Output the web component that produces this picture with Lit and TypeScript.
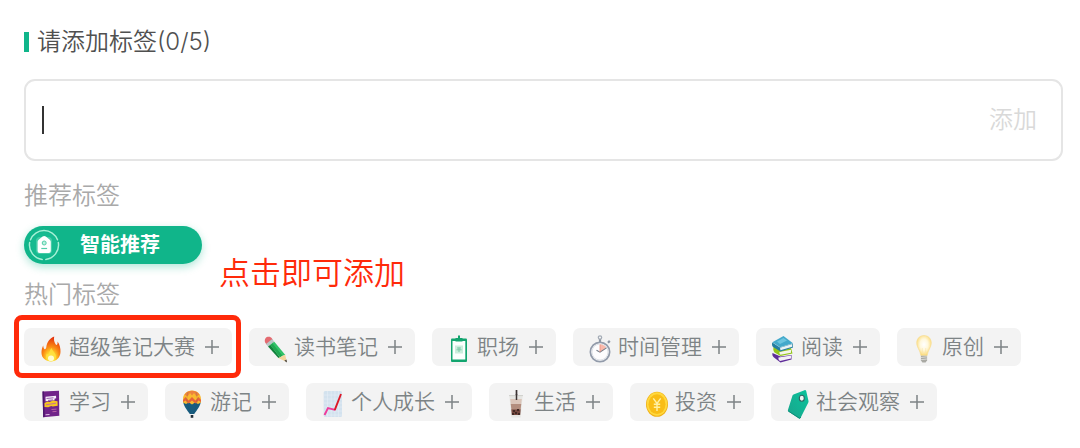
import { LitElement, html, css, svg, SVGTemplateResult } from "lit";
import { customElement, property, state } from "lit/decorators.js";

const icons: Record<string, SVGTemplateResult> = {
  fire: svg`
    <defs>
      <radialGradient id="fire" cx=".5" cy=".85" r=".8">
        <stop offset="0" stop-color="#fff9b0"/><stop offset=".25" stop-color="#ffdc2e"/>
        <stop offset=".55" stop-color="#fb8b14"/><stop offset="1" stop-color="#e5350f"/>
      </radialGradient>
    </defs>
    <path fill="url(#fire)" d="M17.200 1.500c-.4 2.800-.3 5 1.400 7.700.9 1.300 1.700.900 1.900-.6.100-.9.100-1.500 0-2.200 2.200 2.900 3.200 6.600 3 10.600C23.300 22.600 19.300 26.500 14 26.500S4.600 22.900 4.500 18c-.1-2.700.6-5.400 1.700-7.600.2 1.600.5 3 1.200 3.700.9.6 1.700-.3 1.900-2C9.800 7.500 12.500 3.300 17.200 1.500z"/>
    <path fill="#ffe03f" fill-opacity=".85" d="M14.600 13c.5 2.800 4.300 4.800 4.300 8.500 0 2.700-2.200 4.800-4.900 4.800s-4.900-1.800-4.900-4.600c0-1.300.4-2.500.9-3.200.2 1 .8 1.300 1.300 1 1.300-.9 1.100-4.300 3.300-6.500z"/>
    <ellipse cx="14" cy="23.300" rx="3" ry="2.800" fill="#fffbd0"/>`,
  pencil: svg`
    <path fill="#e46a70" d="M3.500 3.200c1.500-2 5.200-2 6.500.200l.8 1.500-6.300 4.600-1-1.400c-1-1.500-1-3.500 0-4.900z"/>
    <path fill="#b9c6c6" d="M4 8.900l6.300-4.800 2 2.600-6.300 4.900z"/>
    <path fill="#12823c" d="M6 11.600l2.400-1.800 9.800 13-1.800.300z"/>
    <path fill="#1fa851" d="M8 10l3.100-2.400 9.800 13-2.900 2z"/>
    <path fill="#30c268" d="M10.300 8.200l2-1.500 11 13.300-2.600.800z"/>
    <path fill="#f3d59b" d="M16.200 23l7-3.300 1.600 7.300z"/>
    <path fill="#45413c" d="M22.300 25.800l2.200-1.400.5 3.100z"/>`,
  board: svg`
    <rect x="6" y="3.500" width="16" height="23.500" rx="1" fill="#12a56f"/>
    <rect x="7.500" y="6" width="12.800" height="18.500" fill="#fbfffd"/>
    <rect x="10" y="10.500" width="8" height="8" fill="#cbeedd"/>
    <path d="M12 13h4M11.500 14.800h5M14 12.500v4.500" stroke="#7fc9a8" fill="none"/>
    <path fill="#14a46f" d="M13 .5h2V3h2.500v3.500h-7V3H13z"/>`,
  timer: svg`
    <circle cx="14" cy="2.500" r="1.700" fill="none" stroke="#a4acb6" stroke-width="1.200"/>
    <path d="M14 4.200v3M22 7.700l1.800-1.800" stroke="#8d96a3" stroke-width="2.200"/>
    <circle cx="14" cy="17" r="9.600" fill="#fdfdfe" stroke="#929baa" stroke-width="1.800"/>
    <circle cx="14" cy="17" r="8" fill="none" stroke="#dfe3e8" stroke-width="1"/>
    <path fill="#f9b9ab" d="M14 17V9.300a7.600 7.600 0 0 1 6.200 3.400z"/>
    <path d="M10.500 15.300L14 17.200l6.500-4.300" fill="none" stroke="#747c87" stroke-width="1.100"/>
    <path d="M14 17V9.500" stroke="#e88e7e" stroke-width=".8"/>`,
  books: svg`
    <path fill="#5f2c99" d="M3.500 18l8 3.500 11-1.500v4.500l-11 3L5 22.500c-1.500-1-2-3-1.500-4.500z"/>
    <path fill="#f3f0f6" d="M9.500 22.500l12.500-2v3l-11 2.500c-1.300-.700-1.800-2-1.500-3.500z"/>
    <path fill="#94c51b" d="M5 11l7 4.500L22 13l1.500 5.500-12 2.500-6-3.500c-1.500-1.500-1.500-5-.5-6.500z"/>
    <path fill="#f5f5ea" d="M10.500 17l11.500-2.300v3l-10.500 2.100c-1-.7-1.200-1.600-1-2.800z"/>
    <path fill="#237da0" d="M3.300 7.500l7.700 5L24 8.500v4l-12.500 4-7.500-4.500c-1-1-1.300-3-.7-4.500z"/>
    <path fill="#e9f3f5" d="M11 12.700l12.300-3.600v2.600l-11.800 3.600z"/>
    <path fill="#43a9cb" d="M3.300 7.300L14.500 1 24 8.300l-13 4z"/>
    <path fill="#6cc5df" d="M8 6.600l6.500-3.700 3.500 2.500-7 3.600z"/>`,
  bulb: svg`
    <defs>
      <radialGradient id="bulb" cx=".5" cy=".45" r=".55">
        <stop offset="0" stop-color="#fff"/><stop offset=".5" stop-color="#fff8dc"/><stop offset="1" stop-color="#fbd976"/>
      </radialGradient>
    </defs>
    <path fill="url(#bulb)" stroke="#f7dc91" stroke-width=".6" d="M14 .5c-4.300 0-7.300 3.200-7.300 7.400 0 4.800 3.500 7 4.100 12.600h6.400c.6-5.600 4.100-7.800 4.100-12.600C21.300 3.700 18.300.5 14 .5z"/>
    <path d="M12.700 19l-.5-6M15.300 19l.5-6" stroke="#f8e4ab" stroke-width=".6"/>
    <path fill="#a9a9a3" d="M10.900 20.800h6.200v4.400l-1.500 2.300h-3.200l-1.500-2.300z"/>
    <path d="M11 22.500l6-.7M11 24.700l6-.7" stroke="#dededa" stroke-width=".9"/>`,
  study: svg`
    <path fill="#702389" d="M5.500 1.500L22 .8l.3 25L6.200 27.200z"/>
    <path fill="#4b176b" d="M5.500 1.500L7 1.400l.7 25.700-1.500.100z"/>
    <path fill="#f6eefa" d="M8.500 6.800l10.500-1 .2 2.500-1.700.400.100 1.600-9 1z"/>
    <path d="M9.500 8.500l7-.7M11 10.400l5-.5" stroke="#702389" stroke-width=".7"/>
    <path fill="#f6c51e" d="M7.500 13l3-1.500 2 .5 3.500-1.500 4.500.8.2 4.500-5 .8-1.500-.6-3 1.300-3.700-.2z"/>
    <path d="M9 14.800l10-1.600M14.500 19.500l5-.4M15.500 21.700l4-.3" stroke="#bf68a8" stroke-width=".9"/>
    <path d="M8.500 24.800l4-.3" stroke="#e5c8ec"/>`,
  balloon: svg`
    <path fill="#175c7f" d="M5 10.500h18c-.2 5-4 9.500-6.800 13.500h-4.400C9 20 5.200 15.500 5 10.500z"/>
    <path fill="#f9b92f" d="M14 .5c-5.300 0-9 3.600-9 8.700v3.300l3 1.500 3-1.500 3 2 3-2 3 1.500 3-1.500V9.200c0-5.100-3.700-8.700-9-8.700z"/>
    <path fill="#e66339" d="M5 10l2.500-3 3 3.500L14 7l3.500 3.500 3-3.500 2.500 3v2L20.500 10.500l-3 3L14 10.500l-3.500 3-3-3L5 12z"/>
    <path fill="#ed823d" d="M6.500 4.500l3 2L12 3l2 2.500L16 3l2.500 3.500 3-2L19 2.100C15.500.2 12.500.2 9 2.100z"/>
    <path d="M10 2c-2.500 7-.5 15 3 22M18 2c2.500 7 .500 15-3 22" fill="none" stroke="#293f55" stroke-opacity=".25" stroke-width=".6"/>
    <path fill="#222f3a" d="M12.700 25h2.600v2.800h-2.600z"/>`,
  chart: svg`
    <rect x="4.700" y="1" width="18.300" height="26" rx="1.500" fill="#d3e2ee"/>
    <path d="M8.500 1v26M12.200 1v26M15.900 1v26M19.600 1v26M4.700 5h18.300M4.700 9h18.300M4.700 13h18.300M4.700 17h18.300M4.700 21h18.300M4.700 25h18.300" stroke="#e5eff6" stroke-width=".6"/>
    <path d="M5.500 25L9 18l7.200 1.800" fill="none" stroke="#ef3b9a" stroke-width="1.900"/>
    <path d="M15.700 20.200L22 4" stroke="#dc1826" stroke-width="1.900"/>`,
  drink: svg`
    <path d="M14.500 0v7" stroke="#3c3434" stroke-width="1.700"/>
    <path fill="#e6e6e3" d="M7.300 5.500h13.400l-2.100 22h-9.200z"/>
    <path fill="#dbc5b9" d="M8.200 9h11.600l-.7 6H8.900z"/>
    <path fill="#b38d7d" d="M8.800 14h10.400l-.6 6H9.400z"/>
    <path fill="#75483f" d="M9.300 19.500h9.400l-.5 5.500H9.800z"/>
    <path fill="#422923" d="M11 20h2v2h-2zM15 19h2v2h-2zM13 22h2v2h-2zM16 23h2v2h-2zM10 23h2v2h-2z"/>
    <path d="M7 5.600h14" stroke="#cfcfcc"/>
    <path d="M14.500 4v6" stroke="#3c3434" stroke-width="1.500"/>`,
  coin: svg`
    <ellipse cx="14" cy="14.300" rx="11" ry="12.500" fill="#f0b015"/>
    <ellipse cx="14" cy="14" rx="10.300" ry="11.800" fill="#ffd83d"/>
    <ellipse cx="14" cy="14.200" rx="8.500" ry="9.900" fill="#f9bd16"/>
    <path d="M10.300 8.300L14 13.500l3.700-5.200M14 13.500V21M10.800 14.300h6.400M10.800 17.300h6.400" fill="none" stroke="#fff0a3" stroke-width="1.400"/>`,
  tag: svg`
    <defs>
      <linearGradient id="tag" x1="0" y1="1" x2="1" y2="0">
        <stop offset="0" stop-color="#19a58c"/><stop offset="1" stop-color="#0bc39c"/>
      </linearGradient>
    </defs>
    <path fill="url(#tag)" d="M9.500 4.500L20.500.200c.8-.3 1.500.1 1.700.9L24.500 11c.100.600 0 1.200-.3 1.700L16.500 28c-.4.700-1 .8-1.600.4L4.500 21.500c-.6-.4-.8-1-.5-1.700L8.500 5.500c.2-.5.500-.8 1-1z"/>
    <path d="M4.200 21L15.500 28.200 17 27" fill="none" stroke="#0d8d79" stroke-width="1"/>
    <ellipse cx="17.800" cy="8.200" rx="2.500" ry="3" fill="#eff5f4" stroke="#2c6560" stroke-width="1.100"/>`,
};

@customElement("tag-chip")
class TagChip extends LitElement {
  @property() icon = "";
  @property() label = "";

  static styles = css`
    :host { display: block; }
    .chip {
      display: flex;
      align-items: center;
      height: 38px;
      padding: 0 13px;
      border: 0;
      border-radius: 7px;
      background: #f3f3f3;
      color: #7d8385;
      font: inherit;
      font-size: 21px;
      line-height: 32px;
      white-space: nowrap;
      cursor: pointer;
    }
    .icon { flex: none; width: 28px; height: 28px; margin: 4px 4px 0 0; overflow: visible; }
    .plus { flex: none; width: 14px; height: 14px; margin-left: 10px; }
  `;

  render() {
    return html`<button class="chip" type="button">
      <svg class="icon" viewBox="0 0 28 28" aria-hidden="true">${icons[this.icon]}</svg>
      <span>${this.label}</span>
      <svg class="plus" viewBox="0 0 14 14" aria-hidden="true">
        <path d="M0 7h14M7 0v14" stroke="#7d8385" stroke-width="1.500"/>
      </svg>
    </button>`;
  }
}

@customElement("app-root")
class AppRoot extends LitElement {
  @state() private value = "";

  private tags = [
    ["fire", "超级笔记大赛"], ["pencil", "读书笔记"], ["board", "职场"],
    ["timer", "时间管理"], ["books", "阅读"], ["bulb", "原创"],
    ["study", "学习"], ["balloon", "游记"], ["chart", "个人成长"],
    ["drink", "生活"], ["coin", "投资"], ["tag", "社会观察"],
  ];

  static styles = css`
    :host {
      display: block;
      box-sizing: border-box;
      padding: 24px 17px 24px 24px;
      background: #fff;
      font-family: Inter, "Noto Sans CJK SC", sans-serif;
      font-weight: 350;
    }
    .title {
      display: flex;
      align-items: center;
      gap: 8px;
      color: #505050;
      font-size: 24px;
      line-height: 36px;
    }
    .title::before { content: ""; width: 5px; height: 20px; background: #10b58a; }
    .entry {
      display: flex;
      align-items: center;
      box-sizing: border-box;
      height: 82px;
      margin: 19px 0 17px;
      padding: 0 24px 0 16px;
      border: 2px solid #e5e5e5;
      border-radius: 11px;
    }
    .caret { width: 2px; height: 28px; background: #333; }
    .field {
      flex: 1;
      min-width: 0;
      border: 0;
      outline: 0;
      padding: 0;
      background: none;
      color: #505050;
      font: inherit;
      font-size: 24px;
      line-height: 36px;
    }
    .add {
      border: 0;
      padding: 0;
      background: none;
      color: #d9d9d9;
      font: inherit;
      font-size: 24px;
      line-height: 36px;
    }
    .group { margin: 0; color: #a9a9a9; font-size: 24px; font-weight: inherit; line-height: 36px; }
    .smart-row { position: relative; margin: 12px 0 13px; }
    .smart {
      display: flex;
      align-items: center;
      width: 178px;
      height: 38px;
      padding: 0 4px;
      border: 0;
      border-radius: 19px;
      background: #10b58a;
      box-shadow: 0 3px 8px #10b58a55;
      color: #fff;
      font: inherit;
      font-size: 20px;
      font-weight: 700;
      line-height: 30px;
    }
    .smart svg { width: 32px; height: 32px; margin-right: 20px; }
    .note {
      position: absolute;
      left: 195px;
      top: 24px;
      color: #ff2a0a;
      font-size: 31px;
      line-height: 46px;
      white-space: nowrap;
    }
    .tags {
      display: flex;
      flex-wrap: wrap;
      gap: 17px;
      margin: 15px 0 0;
      padding: 0;
      list-style: none;
    }
    .marked { position: relative; }
    .marked::after {
      content: "";
      position: absolute;
      inset: -13px -9px -12px -10px;
      border: 5px solid #ff2a0a;
      border-radius: 8px;
      pointer-events: none;
    }
  `;

  render() {
    return html`
      <label class="title" for="tag-input"><span>请添加标签(0/5)</span></label>
      <div class="entry">
        ${this.value ? "" : html`<span class="caret"></span>`}
        <input class="field" id="tag-input" type="text" .value=${this.value}
          @input=${(e: Event) => { this.value = (e.target as HTMLInputElement).value; }} />
        <button class="add" type="button">添加</button>
      </div>
      <h2 class="group">推荐标签</h2>
      <div class="smart-row">
        <button class="smart" type="button">
          <svg viewBox="0 0 32 32" aria-hidden="true">
            <circle cx="16" cy="16" r="13" fill="#26c49a" opacity=".35"/>
            <g fill="none" stroke="#a6f0d6" stroke-width="1.500" stroke-linecap="round">
              <path d="M2.500 10.700A14.500 14.500 0 0 1 29.500 10.700"/>
              <path d="M30.300 13.500A14.500 14.500 0 0 1 17.800 30.400"/>
              <path d="M14.200 30.400A14.500 14.500 0 0 1 1.700 13.500"/>
            </g>
            <rect x="8" y="8" width="16" height="17" rx="4" fill="#8be8c9" opacity=".4"/>
            <path fill="#fff" d="M14.600 7.600q1.600-1.200 3.200 0l4 3.200q1 .8 1 2V22q0 2-2 2h-9.200q-2 0-2-2v-9.200q0-1.200 1-2z"/>
            <circle cx="16.200" cy="14" r="2" fill="#bdf1df" stroke="#53cda9"/>
            <path d="M13.300 19.500h5.800" stroke="#53cda9" stroke-width="1.200"/>
          </svg>
          <span>智能推荐</span>
        </button>
        <span class="note">点击即可添加</span>
      </div>
      <h2 class="group">热门标签</h2>
      <ul class="tags">
        ${this.tags.map(([icon, label], i) => html`
          <li class=${i === 0 ? "marked" : "item"}><tag-chip .icon=${icon} .label=${label}></tag-chip></li>`)}
      </ul>
    `;
  }
}
